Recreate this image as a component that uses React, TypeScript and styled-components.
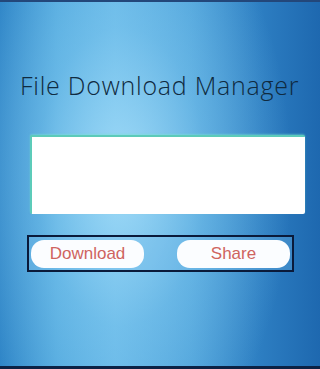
import React from 'react';
import styled, { createGlobalStyle } from 'styled-components';

const GlobalStyle = createGlobalStyle`
  html, body {
    margin: 0;
    padding: 0;
  }
  body {
    font-family: 'Open Sans', 'Liberation Sans', sans-serif;
  }
`;

function App() {
  return (
    <>
      <GlobalStyle />
      <Screen>
        <Title>File Download Manager</Title>
        <TextBox />
        <ButtonBar>
          <ActionButton type="button">Download</ActionButton>
          <ActionButton type="button">Share</ActionButton>
        </ButtonBar>
      </Screen>
    </>
  );
}

export default App;

const Screen = styled.div`
  box-sizing: border-box;
  width: 320px;
  height: 369px;
  display: flex;
  flex-direction: column;
  border-top: 2px solid #23477a;
  border-bottom: 3px solid #0b2245;
  background:
    radial-gradient(ellipse 170px 300px at 38% 48%, rgba(175, 228, 252, 0.8) 0%, rgba(140, 210, 245, 0.4) 50%, rgba(120, 200, 240, 0) 100%),
    linear-gradient(90deg, #2b82c5 0%, #4ea6dc 18%, #62b4e5 36%, #4a9fd8 60%, #2c7dc1 82%, #1e68af 100%);
`;

const Title = styled.h1`
  margin: 67px 0 0 20px;
  font-size: 25px;
  font-weight: 300;
  line-height: 32px;
  color: #0f2a40;
  letter-spacing: 0.75px;
  white-space: nowrap;
`;

const TextBox = styled.div`
  box-sizing: border-box;
  margin: 34px 0 0 30px;
  width: 275px;
  height: 79px;
  background: #ffffff;
  border-top: 2px solid #5ccbb9;
  border-left: 2px solid #5ccbb9;
  border-radius: 2px;
  box-shadow: 0 -1px 2px rgba(120, 230, 210, 0.5);
`;

const ButtonBar = styled.div`
  box-sizing: border-box;
  margin: 21px 0 0 27px;
  width: 267px;
  height: 37px;
  border: 2px solid #0a1a3a;
  padding: 3px 2px 2px 2px;
  display: flex;
  justify-content: space-between;
  background: rgba(120, 190, 235, 0.3);
`;

const ActionButton = styled.button`
  width: 113px;
  height: 28px;
  border: none;
  border-radius: 13px;
  background: #fbfdff;
  color: #cf6460;
  font-family: 'Liberation Sans', Arial, sans-serif;
  font-size: 17px;
  padding: 0;
  cursor: pointer;
`;
